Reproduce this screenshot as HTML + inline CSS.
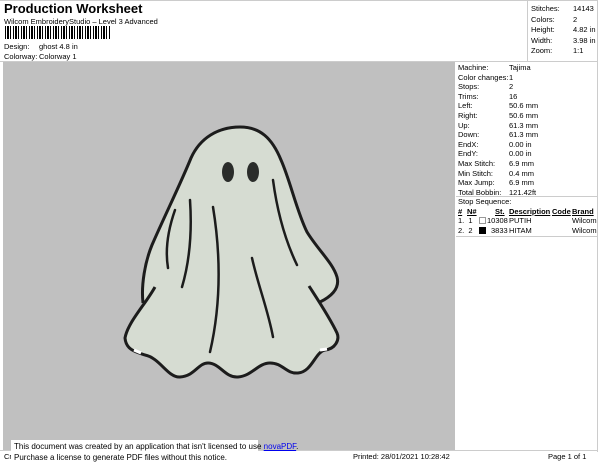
<!DOCTYPE html>
<html><head><meta charset="utf-8"><style>
body{margin:0;width:600px;height:464px;background:#fff;font-family:"Liberation Sans",sans-serif;color:#000;position:relative;overflow:hidden}
.a{position:absolute;white-space:nowrap}
.s{font-size:7.5px}
</style></head><body>
<div class="a" style="left:4px;top:1px;font-size:13px;font-weight:bold">Production Worksheet</div>
<div class="a s" style="left:4px;top:17px">Wilcom EmbroideryStudio – Level 3 Advanced</div>
<div class="a" style="left:5px;top:26px;width:106px;height:13px;background:repeating-linear-gradient(90deg,#000 0 1px,#fff 1px 2px,#000 2px 4px,#fff 4px 5px,#000 5px 6px,#fff 6px 8px)"></div>
<div class="a s" style="left:4px;top:42px">Design:</div><div class="a s" style="left:39px;top:42px">ghost 4.8 in</div>
<div class="a s" style="left:4px;top:52px">Colorway:</div><div class="a s" style="left:39px;top:52px">Colorway 1</div>
<div class="a" style="left:0;top:0;width:598px;height:1px;background:#ccc"></div>
<div class="a" style="left:597px;top:0;width:1px;height:452px;background:#ccc"></div>
<div class="a" style="left:527px;top:0;width:1px;height:62px;background:#ccc"></div>
<div class="a" style="left:0;top:61px;width:598px;height:1px;background:#ccc"></div>
<div class="a" style="left:3px;top:62px;width:452px;height:388px;background:#c0c0c0"></div>
<div class="a s" style="left:531px;top:4px;line-height:10.5px">Stitches:<br>Colors:<br>Height:<br>Width:<br>Zoom:</div>
<div class="a s" style="left:573px;top:4px;line-height:10.5px">14143<br>2<br>4.82 in<br>3.98 in<br>1:1</div>
<div class="a s" style="left:458px;top:63px;line-height:9.6px">Machine:<br>Color changes:<br>Stops:<br>Trims:<br>Left:<br>Right:<br>Up:<br>Down:<br>EndX:<br>EndY:<br>Max Stitch:<br>Min Stitch:<br>Max Jump:<br>Total Bobbin:<br>Stop Sequence:</div>
<div class="a s" style="left:509px;top:63px;line-height:9.6px">Tajima<br>1<br>2<br>16<br>50.6 mm<br>50.6 mm<br>61.3 mm<br>61.3 mm<br>0.00 in<br>0.00 in<br>6.9 mm<br>0.4 mm<br>6.9 mm<br>121.42ft</div>
<div class="a" style="left:456px;top:196px;width:141px;height:1px;background:#ccc"></div>
<div class="a s" style="left:458px;top:207px;font-weight:bold;text-decoration:underline">#</div>
<div class="a s" style="left:467px;top:207px;font-weight:bold;text-decoration:underline">N#</div>
<div class="a s" style="left:495px;top:207px;font-weight:bold;text-decoration:underline">St.</div>
<div class="a s" style="left:509px;top:207px;font-weight:bold;text-decoration:underline">Description</div>
<div class="a s" style="left:552px;top:207px;font-weight:bold;text-decoration:underline">Code</div>
<div class="a s" style="left:572px;top:207px;font-weight:bold;text-decoration:underline">Brand</div>
<div class="a s" style="left:458px;top:216px">1.&nbsp; 1</div><div class="a" style="left:479px;top:217px;width:5px;height:5px;border:1px solid #999"></div><div class="a s" style="left:487px;top:216px">10308</div><div class="a s" style="left:509px;top:216px">PUTIH</div><div class="a s" style="left:572px;top:216px">Wilcom</div>
<div class="a s" style="left:458px;top:226px">2.&nbsp; 2</div><div class="a" style="left:479px;top:227px;width:7px;height:7px;background:#000"></div><div class="a s" style="left:491px;top:226px">3833</div><div class="a s" style="left:509px;top:226px">HITAM</div><div class="a s" style="left:572px;top:226px">Wilcom</div>
<div class="a" style="left:456px;top:236px;width:141px;height:1px;background:#ccc"></div>
<div class="a" style="left:0;top:450px;width:598px;height:1px;background:#ccc"></div>
<div class="a s" style="left:4px;top:452px">Cr</div>
<div class="a s" style="left:353px;top:452px">Printed: 28/01/2021 10:28:42</div>
<div class="a s" style="left:548px;top:452px">Page 1 of 1</div>
<div class="a" style="left:11px;top:440px;width:247px;height:24px;background:#fff"></div>
<div class="a" style="left:14px;top:441px;font-size:8px;line-height:11px">This document was created by an application that isn't licensed to use <span style="color:#00e;text-decoration:underline">novaPDF</span>.<br>Purchase a license to generate PDF files without this notice.</div>
<svg class="a" style="left:0;top:0" width="600" height="464" viewBox="0 0 600 464">
<path d="M240,127 C218,127 200,138 191,158 C180,185 165,215 152,245 C145,262 142,285 143,303 L155,287 C145,305 128,322 125,338 C126,350 136,352 145,355 C160,358 168,378 180,377 C195,376 198,363 208,363 C220,363 225,378 238,377 C252,376 258,363 270,363 C283,363 286,374 298,373 C312,372 315,352 325,350 C335,349 340,340 337,333 C330,318 318,300 320,302 C332,296 340,288 337,277 C333,263 318,250 307,232 C297,212 290,180 281,160 C272,138 260,127 240,127 Z" fill="#d6dcd2"/>
<path d="M143,303 C141,285 145,262 152,245 C165,215 180,185 191,158 C200,138 218,127 240,127 C260,127 272,138 281,160 C290,180 297,212 307,232 C318,250 333,263 337,277 C340,288 332,296 320,302" fill="none" stroke="#1c1c1c" stroke-width="3"/>
<path d="M155,287 C145,305 128,322 125,338 C126,350 136,352 145,355 C160,358 168,378 180,377 C195,376 198,363 208,363 C220,363 225,378 238,377 C252,376 258,363 270,363 C283,363 286,374 298,373 C312,372 315,352 325,350 C335,349 340,340 337,333 C330,318 318,300 309,286" fill="none" stroke="#1c1c1c" stroke-width="3"/>
<ellipse cx="228" cy="172" rx="6" ry="10" fill="#2a2c2a"/>
<ellipse cx="253" cy="172" rx="6" ry="10" fill="#2a2c2a"/>
<g fill="none" stroke="#1c1c1c" stroke-width="2.5" stroke-linecap="round">
<path d="M273,180 C277,210 285,240 297,265"/>
<path d="M190,200 C192,230 190,260 182,287"/>
<path d="M213,207 C220,250 222,300 210,352"/>
<path d="M252,258 C258,285 268,310 273,337"/>
<path d="M175,210 C168,230 165,250 168,268"/>
</g>
<path d="M134,350 L141,353" stroke="#fff" stroke-width="3"/>
<path d="M320,350 L327,349" stroke="#fff" stroke-width="3"/>
</svg>
</body></html>
